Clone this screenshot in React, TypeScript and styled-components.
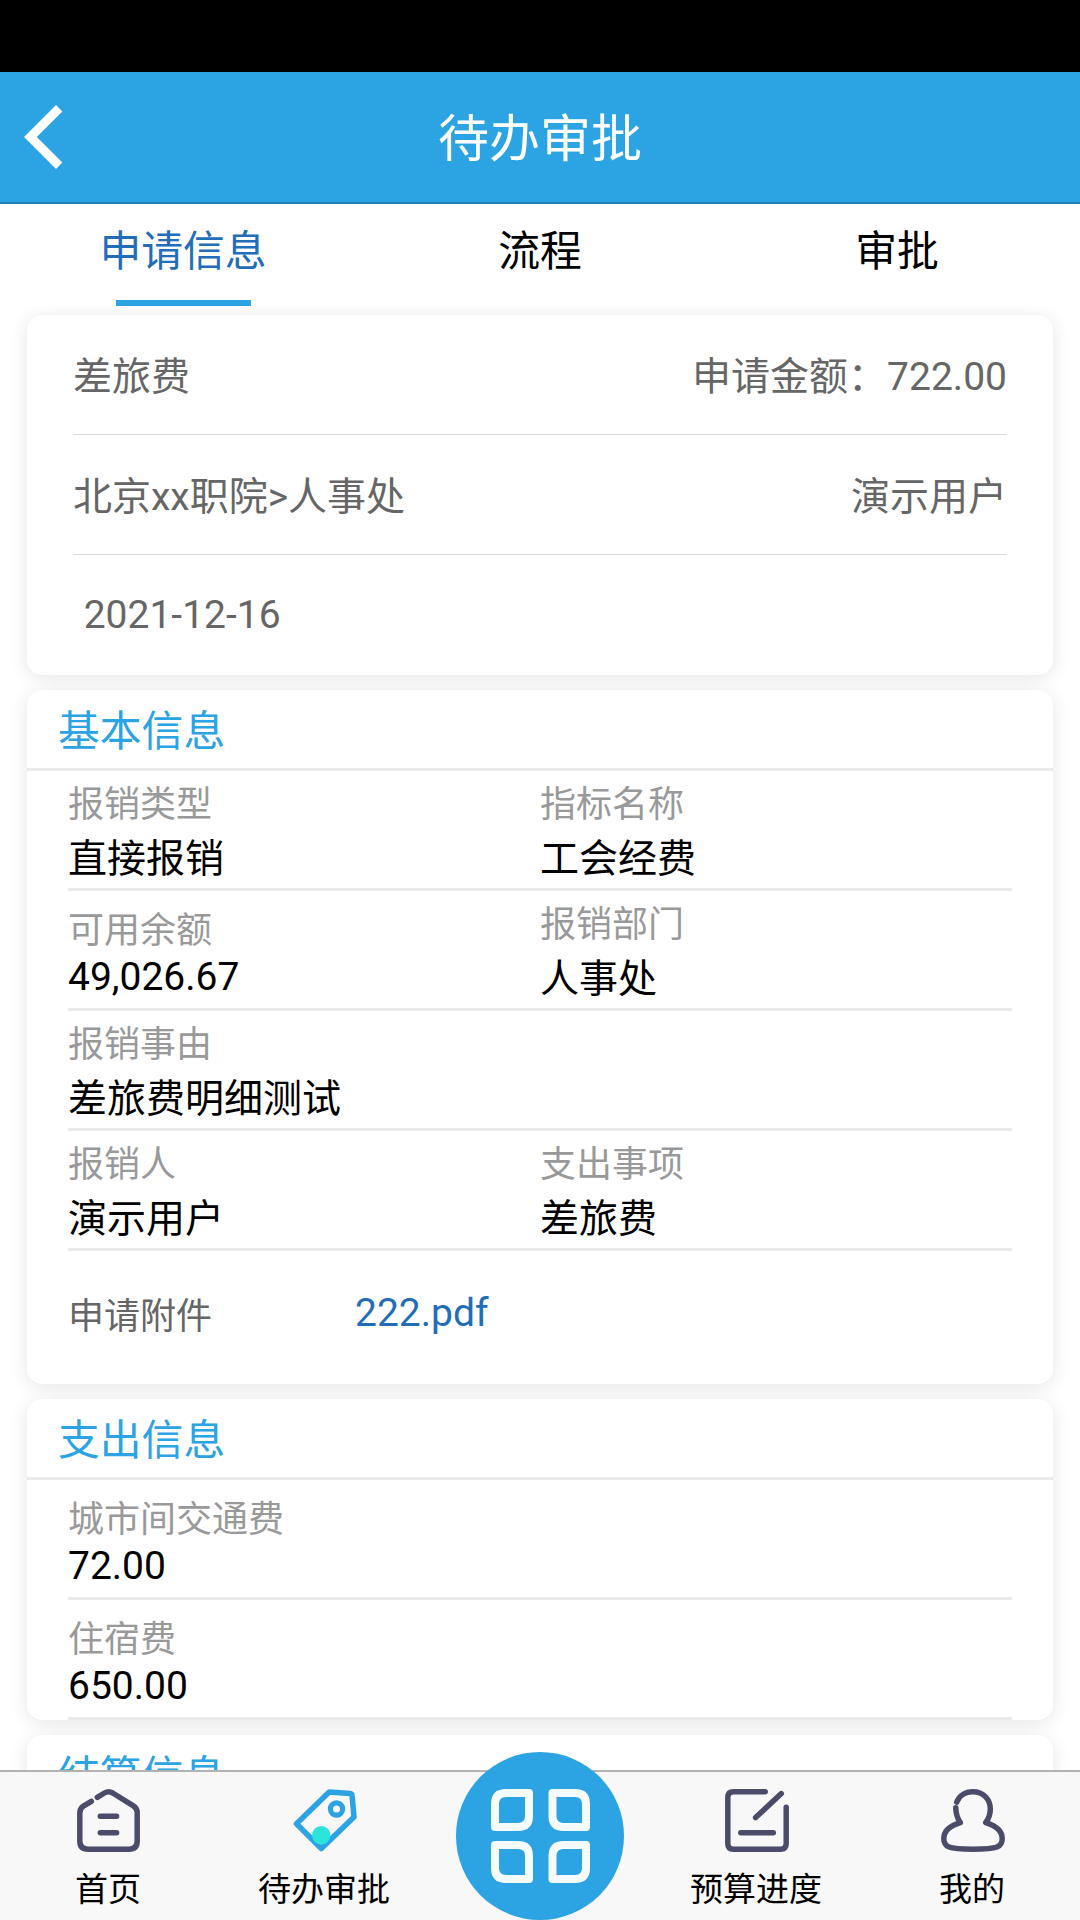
import React from 'react';
import styled, { createGlobalStyle } from 'styled-components';

const BLUE = '#2ca3e3';
const INK = '#4b4c69';

const GlobalStyle = createGlobalStyle`
  * { box-sizing: border-box; }
  body {
    margin: 0;
    background: #fff;
    font-family: Roboto, "Noto Sans CJK SC", sans-serif;
  }
`;

const Screen = styled.div`
  display: flex;
  flex-direction: column;
  width: 1080px;
  height: 1920px;
  overflow: hidden;
  background: #fff;
`;

const StatusBar = styled.div`
  flex: none;
  height: 72px;
  background: #000;
`;

const Header = styled.header`
  flex: none;
  display: grid;
  grid-template-columns: 200px 1fr 200px;
  align-items: center;
  height: 132px;
  background: ${BLUE};
  border-bottom: 2px solid #2380b3;
`;

const BackButton = styled.button`
  display: flex;
  padding: 0 0 0 20px;
  border: 0;
  background: none;
`;

const Title = styled.h1`
  margin: 0;
  padding-top: 6px;
  font-size: 51px;
  line-height: 74px;
  font-weight: 400;
  text-align: center;
  color: #fff;
`;

const Tabs = styled.nav`
  flex: none;
  display: flex;
  height: 102px;
  padding: 0 4.5px;
`;

const Tab = styled.div<{ $active?: boolean }>`
  flex: 1;
  display: flex;
  flex-direction: column;
  align-items: center;
  justify-content: space-between;
  padding-top: 17px;
  font-size: 41.8px;
  line-height: 62px;
  color: ${(p) => (p.$active ? '#236db8' : '#000')};

  &::after {
    content: '';
    width: 135px;
    height: 6px;
    background: ${(p) => (p.$active ? BLUE : 'transparent')};
  }
`;

const Content = styled.main`
  flex: 1;
  min-height: 0;
  display: flex;
  flex-direction: column;
  gap: 15px;
  padding: 9px 27px 0;
  overflow: hidden;
`;

const Card = styled.section`
  flex: none;
  border-radius: 15px;
  background: #fff;
  box-shadow: 0 3px 18px rgba(0, 0, 0, 0.1);
`;

const SummaryCard = styled(Card)`
  padding: 0 46px;
`;

const SummaryRow = styled.div`
  display: flex;
  align-items: center;
  justify-content: space-between;
  height: 120px;
  padding-bottom: 4px;
  border-bottom: 1px solid #dcdcdc;
  font-size: 39px;
  white-space: pre;
  color: #666;

  &:last-child {
    padding: 0 0 0 1px;
    border-bottom: 0;
  }
`;

const CardTitle = styled.h2`
  display: flex;
  align-items: center;
  height: 81px;
  margin: 0;
  padding: 0 0 2px 31px;
  border-bottom: 3px solid #eaeaea;
  font-size: 41.8px;
  font-weight: 400;
  color: ${BLUE};
`;

const CardBody = styled.div`
  padding: 0 41px;
`;

const FieldRow = styled.div`
  display: flex;
  height: 120px;
  border-bottom: 3px solid #eaeaea;
`;

const Field = styled.div<{ $numeric: boolean }>`
  flex: 1;
  display: flex;
  flex-direction: column;
  justify-content: center;
  gap: ${(p) => (p.$numeric ? 1 : 0)}px;
  padding: ${(p) => (p.$numeric ? '1px 0 0' : '0 0 1px')};
`;

const Label = styled.div`
  font-size: 36px;
  color: #999;
`;

const Value = styled.div`
  font-size: 39px;
  color: #000;
`;

const Attachment = styled.div`
  display: grid;
  grid-template-columns: 287px 1fr;
  align-items: center;
  height: 133px;
  padding-bottom: 10px;
`;

const AttachmentLabel = styled(Label)`
  color: #666;
`;

const FileLink = styled.a`
  font-size: 39px;
  color: #236db8;
`;

const BottomBar = styled.footer`
  flex: none;
  position: relative;
  display: flex;
  align-items: flex-end;
  height: 150px;
  border-top: 2px solid #b2b2b2;
  background: #f8f8f8;
`;

const NavItem = styled.div`
  flex: 1;
  display: flex;
  flex-direction: column;
  align-items: center;
  height: 131px;
  font-size: 33px;
  line-height: 48px;
  color: #000;

  svg { margin: 0 0 14px 2px; }
`;

const NavCenter = styled.div`
  flex: 1;
  display: flex;
  justify-content: center;
`;

const RoundButton = styled.button`
  flex: none;
  display: flex;
  align-items: center;
  justify-content: center;
  width: 168px;
  height: 168px;
  padding: 0 0 0 1px;
  border: 0;
  border-radius: 50%;
  background: ${BLUE};
`;

const HomeIcon = () => (
  <svg width="64" height="63" viewBox="0 0 64 63" fill="none" stroke={INK} strokeWidth="5.5" strokeLinecap="round" strokeLinejoin="round">
    <path d="M14.3 12.3L6.8 16.8Q2.8 19.4 2.8 24V52Q2.8 60.2 11 60.2H52Q60.2 60.2 60.2 52V23.5Q60.2 19.2 56.4 16.8L35.7 4Q31.5 1.6 27.4 4L20.3 8.3" />
    <path d="M23.3 27.3H39.6M23.3 43.7H39.6" />
  </svg>
);

const TagIcon = () => (
  <svg width="64" height="63" viewBox="0 0 64 63" fill="none" stroke={BLUE} strokeWidth="5.5" strokeLinejoin="round">
    <path d="M36.2 3L57 4.5Q59 4.7 59.1 6.7L61 28L28.3 59.5L3.5 34.7Z" />
    <circle cx="43.5" cy="20" r="6.1" strokeWidth="5.2" />
    <circle cx="28.3" cy="46.3" r="9.2" fill="#2de4dd" stroke="none" />
  </svg>
);

const EditIcon = () => (
  <svg width="64" height="63" viewBox="0 0 64 63" fill="none" stroke={INK} strokeWidth="5.5" strokeLinecap="round" strokeLinejoin="round">
    <path d="M40.2 2.8H8.5Q2.8 2.8 2.8 8.5V54.5Q2.8 60.2 8.5 60.2H55.5Q61.2 60.2 61.2 54.5V18.3" />
    <path d="M56.3 4.6L30.6 28.6M15.8 43.7H48.3" />
  </svg>
);

const UserIcon = () => (
  <svg width="64" height="63" viewBox="0 0 64 63" fill="none" stroke={INK} strokeWidth="5.5" strokeLinecap="round" strokeLinejoin="round">
    <path d="M15.8 13.2C18 6.5 24.5 2.8 32 2.8C42 2.8 49.3 10 49.3 20C49.3 25.5 47.6 30 44.7 33.6C54 36.5 61.2 42 61.2 49.5C61.2 58 57 60.2 32 60.2C7 60.2 2.8 58 2.8 49.5C2.8 42 10 36.5 19.3 33.6C16.5 29.5 14.8 25 14.8 18.8" />
  </svg>
);

const GridIcon = () => (
  <svg width="100" height="94" viewBox="0 0 100 94" fill="none" stroke="#f4fcff" strokeWidth="8" strokeLinejoin="round">
    <path d="M4 38V15Q4 4 15 4H38V27Q38 38 27 38Z" />
    <path d="M95 38V15Q95 4 84 4H61.5V27Q61.5 38 72.5 38Z" />
    <path d="M4 56V79Q4 90 15 90H38V67Q38 56 27 56Z" />
    <path d="M95 56V79Q95 90 84 90H61.5V67Q61.5 56 72.5 56Z" />
  </svg>
);

type FieldData = { label: string; value: string };

const basicRows: FieldData[][] = [
  [{ label: '报销类型', value: '直接报销' }, { label: '指标名称', value: '工会经费' }],
  [{ label: '可用余额', value: '49,026.67' }, { label: '报销部门', value: '人事处' }],
  [{ label: '报销事由', value: '差旅费明细测试' }],
  [{ label: '报销人', value: '演示用户' }, { label: '支出事项', value: '差旅费' }],
];

const expenseRows: FieldData[][] = [
  [{ label: '城市间交通费', value: '72.00' }],
  [{ label: '住宿费', value: '650.00' }],
];

const FieldRows = ({ rows }: { rows: FieldData[][] }) => (
  <>
    {rows.map((row) => (
      <FieldRow key={row[0].label}>
        {row.map((field) => (
          <Field key={field.label} $numeric={/^[\d.,]+$/.test(field.value)}>
            <Label>{field.label}</Label>
            <Value>{field.value}</Value>
          </Field>
        ))}
      </FieldRow>
    ))}
  </>
);

export default function App() {
  return (
    <>
      <GlobalStyle />
      <Screen>
        <StatusBar />
        <Header>
          <BackButton aria-label="返回">
            <svg width="46" height="66" viewBox="0 0 46 66" fill="none" stroke="#fff" strokeWidth="9">
              <path d="M39.2 4.2L10.4 33L39.2 61.8" />
            </svg>
          </BackButton>
          <Title>待办审批</Title>
        </Header>
        <Tabs>
          <Tab $active>申请信息</Tab>
          <Tab>流程</Tab>
          <Tab>审批</Tab>
        </Tabs>
        <Content>
          <SummaryCard>
            <SummaryRow>
              <span>差旅费</span>
              <span>申请金额：722.00</span>
            </SummaryRow>
            <SummaryRow>
              <span>北京xx职院&gt;人事处</span>
              <span>演示用户</span>
            </SummaryRow>
            <SummaryRow>
              <span>{' 2021-12-16'}</span>
            </SummaryRow>
          </SummaryCard>
          <Card>
            <CardTitle>基本信息</CardTitle>
            <CardBody>
              <FieldRows rows={basicRows} />
              <Attachment>
                <AttachmentLabel>申请附件</AttachmentLabel>
                <FileLink>222.pdf</FileLink>
              </Attachment>
            </CardBody>
          </Card>
          <Card>
            <CardTitle>支出信息</CardTitle>
            <CardBody>
              <FieldRows rows={expenseRows} />
            </CardBody>
          </Card>
          <Card>
            <CardTitle>结算信息</CardTitle>
          </Card>
        </Content>
        <BottomBar>
          <NavItem>
            <HomeIcon />
            首页
          </NavItem>
          <NavItem>
            <TagIcon />
            待办审批
          </NavItem>
          <NavCenter>
            <RoundButton aria-label="应用">
              <GridIcon />
            </RoundButton>
          </NavCenter>
          <NavItem>
            <EditIcon />
            预算进度
          </NavItem>
          <NavItem>
            <UserIcon />
            我的
          </NavItem>
        </BottomBar>
      </Screen>
    </>
  );
}
